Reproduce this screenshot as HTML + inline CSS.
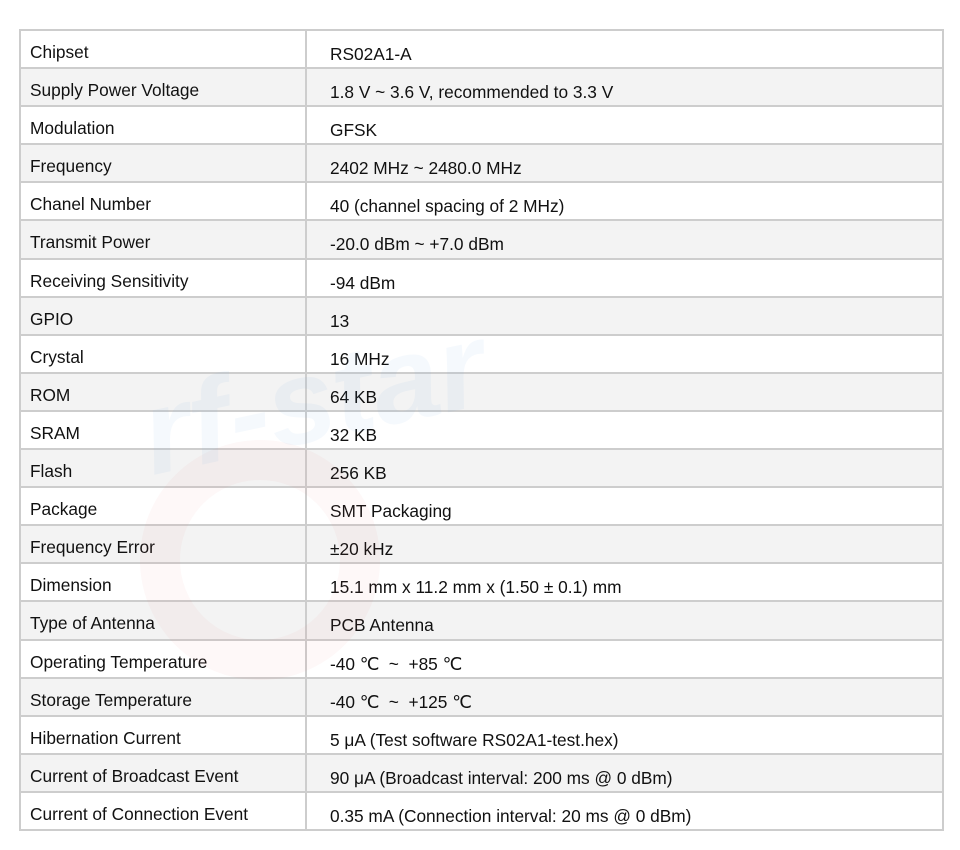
<!DOCTYPE html>
<html><head><meta charset="utf-8"><style>
html,body{margin:0;padding:0;background:#fff;width:960px;height:850px;overflow:hidden}
body{font-family:"Liberation Sans",Arial,sans-serif;font-size:17.3px;color:#111;position:relative}
.t{position:absolute;left:19px;top:29px;width:925px;border:2px solid #cdcdcd;border-top:none;box-sizing:border-box;z-index:1}
.r{height:38.1px;box-sizing:border-box;border-top:2px solid #cdcdcd;display:flex;white-space:nowrap}
.r:nth-child(even){background:#f3f3f3}
.a{width:286px;border-right:2px solid #cdcdcd;padding-left:9px;line-height:42px;box-sizing:border-box}
.b{padding-left:23px;line-height:46px}
.wm{position:absolute;left:140px;top:330px;font-size:120px;font-style:italic;font-weight:bold;color:rgba(120,170,230,0.07);transform:rotate(-12deg);z-index:2}
.arc{position:absolute;left:140px;top:440px;width:240px;height:240px;border-radius:50%;border:40px solid rgba(240,120,120,0.05);box-sizing:border-box;z-index:2}
</style></head><body>
<div class="t">
<div class="r"><div class="a">Chipset</div><div class="b">RS02A1-A</div></div>
<div class="r"><div class="a">Supply Power Voltage</div><div class="b">1.8 V ~ 3.6 V, recommended to 3.3 V</div></div>
<div class="r"><div class="a">Modulation</div><div class="b">GFSK</div></div>
<div class="r"><div class="a">Frequency</div><div class="b">2402 MHz ~ 2480.0 MHz</div></div>
<div class="r"><div class="a">Chanel Number</div><div class="b">40 (channel spacing of 2 MHz)</div></div>
<div class="r"><div class="a">Transmit Power</div><div class="b">-20.0 dBm ~ +7.0 dBm</div></div>
<div class="r"><div class="a">Receiving Sensitivity</div><div class="b">-94 dBm</div></div>
<div class="r"><div class="a">GPIO</div><div class="b">13</div></div>
<div class="r"><div class="a">Crystal</div><div class="b">16 MHz</div></div>
<div class="r"><div class="a">ROM</div><div class="b">64 KB</div></div>
<div class="r"><div class="a">SRAM</div><div class="b">32 KB</div></div>
<div class="r"><div class="a">Flash</div><div class="b">256 KB</div></div>
<div class="r"><div class="a">Package</div><div class="b">SMT Packaging</div></div>
<div class="r"><div class="a">Frequency Error</div><div class="b">±20 kHz</div></div>
<div class="r"><div class="a">Dimension</div><div class="b">15.1 mm x 11.2 mm x (1.50 ± 0.1) mm</div></div>
<div class="r"><div class="a">Type of Antenna</div><div class="b">PCB Antenna</div></div>
<div class="r"><div class="a">Operating Temperature</div><div class="b">-40 ℃ &nbsp;~ &nbsp;+85 ℃</div></div>
<div class="r"><div class="a">Storage Temperature</div><div class="b">-40 ℃ &nbsp;~ &nbsp;+125 ℃</div></div>
<div class="r"><div class="a">Hibernation Current</div><div class="b">5 μA (Test software RS02A1-test.hex)</div></div>
<div class="r"><div class="a">Current of Broadcast Event</div><div class="b">90 μA (Broadcast interval: 200 ms @ 0 dBm)</div></div>
<div class="r"><div class="a">Current of Connection Event</div><div class="b">0.35 mA (Connection interval: 20 ms @ 0 dBm)</div></div>
</div>
<div class="arc"></div>
<div class="wm">rf-star</div>
</body></html>
